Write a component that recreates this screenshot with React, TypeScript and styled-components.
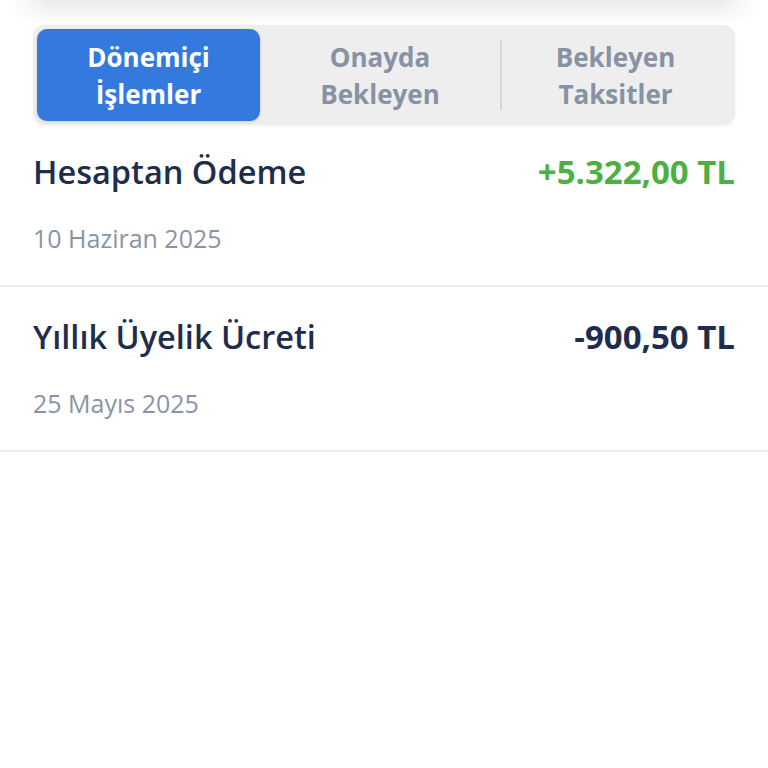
import React, { useState } from 'react';
import styled, { createGlobalStyle } from 'styled-components';

const GlobalStyle = createGlobalStyle`
  html, body {
    margin: 0;
    padding: 0;
    background: #ffffff;
    font-family: "Open Sans", "Noto Sans", sans-serif;
  }
`;

type Transaction = {
  title: string;
  date: string;
  amount: string;
  positive: boolean;
};

const transactions: Transaction[] = [
  { title: 'Hesaptan Ödeme', date: '10 Haziran 2025', amount: '+5.322,00 TL', positive: true },
  { title: 'Yıllık Üyelik Ücreti', date: '25 Mayıs 2025', amount: '-900,50 TL', positive: false },
];

const tabs = [
  ['Dönemiçi', 'İşlemler'],
  ['Onayda', 'Bekleyen'],
  ['Bekleyen', 'Taksitler'],
];

const App: React.FC = () => {
  const [active, setActive] = useState(0);

  return (
    <Page>
      <GlobalStyle />
      <TopShade />
      <Segmented>
        {tabs.map((lines, i) => (
          <Tab key={i} $active={active === i} $divider={i === 2 && active !== 1 && active !== 2} onClick={() => setActive(i)}>
            {lines[0]}
            <br />
            {lines[1]}
          </Tab>
        ))}
      </Segmented>
      <List>
        {transactions.map((t) => (
          <Row key={t.title}>
            <RowTop>
              <Title>{t.title}</Title>
              <Amount $positive={t.positive}>{t.amount}</Amount>
            </RowTop>
            <DateText>{t.date}</DateText>
          </Row>
        ))}
      </List>
    </Page>
  );
};

export default App;

const Page = styled.div`
  width: 768px;
  min-height: 768px;
  background: #ffffff;
  overflow: hidden;
`;

const TopShade = styled.div`
  height: 24px;
  margin: 0 10px;
  background: linear-gradient(to bottom, #ebebeb 0%, #f4f4f4 50%, #ffffff 100%);
  -webkit-mask-image: linear-gradient(to right, transparent 0, #000 40px, #000 calc(100% - 40px), transparent 100%);
`;

const Segmented = styled.div`
  margin: 1px 33px 0;
  height: 100px;
  box-sizing: border-box;
  padding: 4px;
  display: grid;
  grid-template-columns: 223px 240px 1fr;
  background: #eeeeef;
  border-radius: 12px;
  box-shadow: 0 1px 3px rgba(0, 0, 0, 0.06);
`;

const Tab = styled.div<{ $active: boolean; $divider: boolean }>`
  position: relative;
  display: flex;
  align-items: center;
  justify-content: center;
  text-align: center;
  font-size: 26px;
  line-height: 37px;
  padding-top: 2px;
  font-weight: 700;
  border-radius: 10px;
  cursor: pointer;
  color: ${({ $active }) => ($active ? '#ffffff' : '#8792a2')};
  background: ${({ $active }) => ($active ? '#3479de' : 'transparent')};
  box-shadow: ${({ $active }) => ($active ? '0 1px 3px rgba(0,0,0,0.15)' : 'none')};

  &::before {
    content: '';
    display: ${({ $divider }) => ($divider ? 'block' : 'none')};
    position: absolute;
    left: 0;
    top: 11px;
    bottom: 11px;
    width: 1.5px;
    background: #d4d6da;
  }
`;

const List = styled.div`
  display: flex;
  flex-direction: column;
  margin-top: -3px;
`;

const Row = styled.div`
  padding: 30px 33px 31px;
  border-bottom: 2px solid #ebebf0;
`;

const RowTop = styled.div`
  display: flex;
  justify-content: space-between;
  align-items: center;
`;

const Title = styled.div`
  font-size: 32.5px;
  line-height: 40px;
  font-weight: 600;
  color: #1e2d4b;
`;

const Amount = styled.div<{ $positive: boolean }>`
  font-size: 33px;
  line-height: 40px;
  font-weight: 700;
  color: ${({ $positive }) => ($positive ? '#4cb043' : '#1e2d4b')};
`;

const DateText = styled.div`
  margin-top: 30px;
  font-size: 25px;
  line-height: 32px;
  font-weight: 400;
  color: #8a94a6;
`;
